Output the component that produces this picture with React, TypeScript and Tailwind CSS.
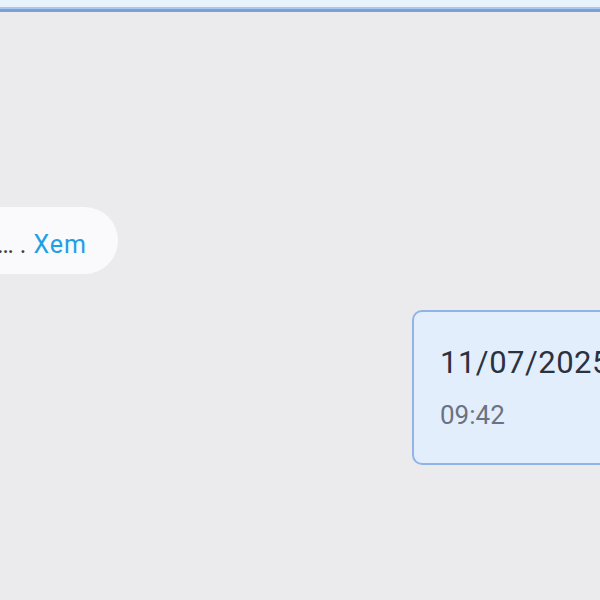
export default function App() {
  return (
    <div
      className="w-[600px] h-[600px] overflow-hidden bg-[#ebebed] flex flex-col"
      style={{ fontFamily: 'Roboto, "Noto Sans", sans-serif' }}
    >
      {/* top header edge */}
      <div className="h-[7px] bg-[#e8f2fd]" />
      <div className="h-[2px] bg-[#a9c8ee]" />
      <div className="h-[3px] bg-[#7aa0d2]" />

      <div className="flex flex-col pt-[195px]">
        {/* incoming message bubble, cut off on the left */}
        <div className="flex">
          <div className="-ml-[82px] w-[200px] h-[67px] rounded-full bg-[#fafafc] flex items-center justify-end pr-[31px] pt-[8px] text-[25px] whitespace-nowrap">
            <span className="text-[#3b3b3b]">… .</span>
            <span className="ml-[7px] tracking-[1px] text-[#1f9fe5]">Xem</span>
          </div>
        </div>

        {/* outgoing date card, cut off on the right */}
        <div className="flex mt-[36px]">
          <div className="ml-[412px] w-[260px] shrink-0 h-[155px] rounded-[10px] border-2 border-[#8fb4e6] bg-[#e3eefd] pl-[26px] pt-[33px]">
            <div className="text-[31px] leading-[36px] tracking-[0.5px] text-[#2a3242]">11/07/2025</div>
            <div className="mt-[19px] text-[26px] leading-[30px] text-[#6b7280]">09:42</div>
          </div>
        </div>
      </div>
    </div>
  );
}
